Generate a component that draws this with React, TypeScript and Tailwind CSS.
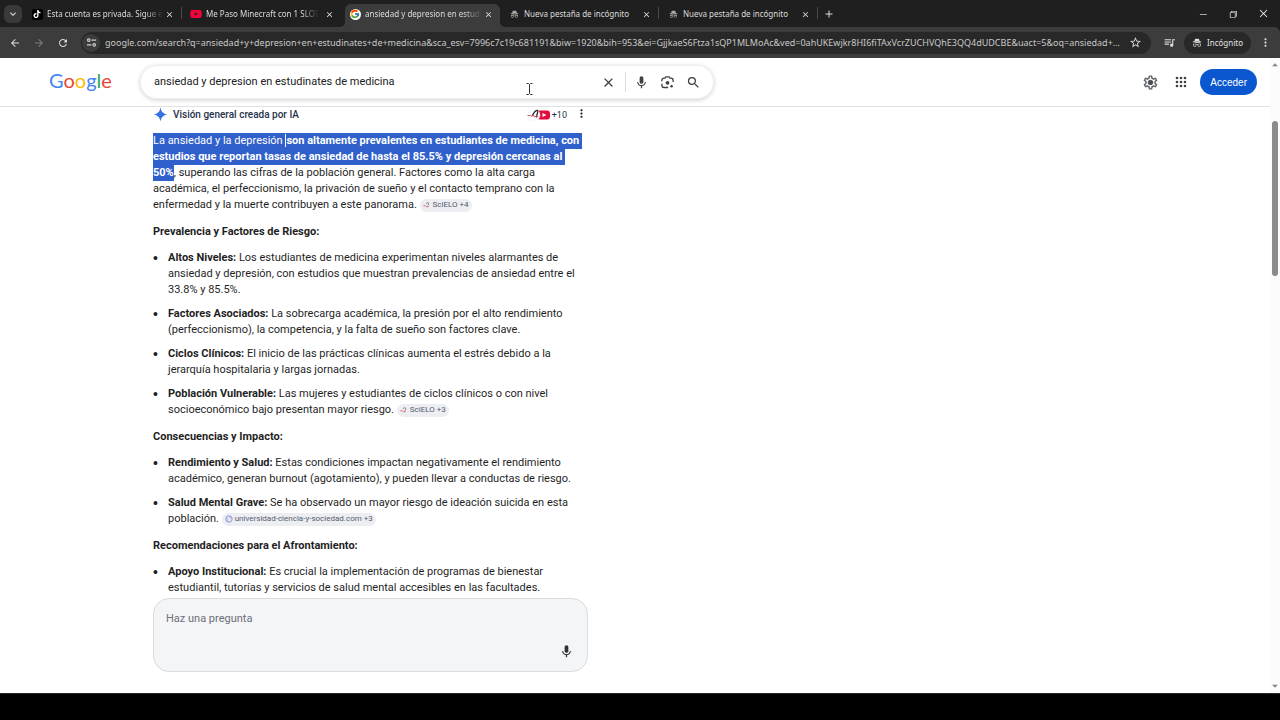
import type { ReactNode } from "react";
import { BsIncognito } from "react-icons/bs";
import { FaYoutube } from "react-icons/fa";
import { FcGoogle } from "react-icons/fc";
import {
  MdAdd,
  MdArrowBack,
  MdArrowDropDown,
  MdArrowDropUp,
  MdArrowForward,
  MdClose,
  MdKeyboardArrowDown,
  MdMic,
  MdMoreVert,
  MdOutlineSettings,
  MdQueueMusic,
  MdRefresh,
  MdSearch,
  MdStarBorder,
} from "react-icons/md";
import { SiTiktok } from "react-icons/si";
import { VscChromeClose, VscChromeMinimize, VscChromeRestore } from "react-icons/vsc";

type TabInfo = { title: string; icon: ReactNode; active?: boolean; fades?: boolean; divider?: boolean };

const tabs: TabInfo[] = [
  {
    title: "Esta cuenta es privada. Sigue e",
    icon: (
      <span className="flex size-[11px] items-center justify-center rounded-[2px] bg-black text-white">
        <SiTiktok size={8} />
      </span>
    ),
    fades: true,
    divider: true,
  },
  { title: "Me Paso Minecraft con 1 SLOT", icon: <FaYoutube size={12} color="#f5033c" />, fades: true },
  {
    title: "ansiedad y depresion en estudi",
    icon: (
      <span className="flex size-[11px] items-center justify-center rounded-full bg-white">
        <FcGoogle size={10} />
      </span>
    ),
    active: true,
    fades: true,
  },
  { title: "Nueva pestaña de incógnito", icon: <BsIncognito size={9} color="#a8a8a8" />, divider: true },
  { title: "Nueva pestaña de incógnito", icon: <BsIncognito size={9} color="#a8a8a8" />, divider: true },
];

function Flare({ side }: { side: "left" | "right" }) {
  return (
    <svg
      viewBox="0 0 5 5"
      className={side === "left" ? "absolute bottom-0 -left-[5px] size-[5px]" : "absolute bottom-0 -right-[5px] size-[5px]"}
      aria-hidden="true"
    >
      <path d={side === "left" ? "M5 0A5 5 0 0 1 0 5H5Z" : "M0 0A5 5 0 0 0 5 5H0Z"} fill="#3c3c3c" />
    </svg>
  );
}

function Tab({ tab }: { tab: TabInfo }) {
  return (
    <div className="flex h-full w-[159px] items-end pr-1">
      <div
        className={
          tab.active
            ? "relative flex h-[23px] min-w-0 flex-1 items-center rounded-t-md bg-[#3c3c3c] pr-[7px] pb-[3px] pl-1"
            : "relative flex h-[23px] min-w-0 flex-1 items-center pr-[7px] pb-[3px] pl-1"
        }
      >
        {tab.active && <Flare side="left" />}
        {tab.active && <Flare side="right" />}
        <button
          type="button"
          role="tab"
          aria-selected={!!tab.active}
          className="flex min-w-0 flex-1 items-center gap-1 text-left"
        >
          <span className="flex w-3 shrink-0 justify-center">{tab.icon}</span>
          <span className={tab.fades ? "mask-r-from-85% whitespace-nowrap" : "whitespace-nowrap"}>{tab.title}</span>
        </button>
        <button type="button" aria-label="Cerrar pestaña" className="text-[#e3e3e3]">
          <MdClose size={9} />
        </button>
      </div>
      {tab.divider && <span className="mb-2 h-3 w-px bg-[#484848]" />}
    </div>
  );
}

function TabStrip() {
  return (
    <div className="flex h-[27px] shrink-0 items-stretch bg-[#1f1f1f] text-[8px] text-[#dcdcdc]">
      <div className="flex w-[27px] shrink-0 items-center pl-1">
        <button
          type="button"
          aria-label="Buscar pestañas"
          className="flex size-[18px] items-center justify-center rounded-md bg-[#3a3a3a]"
        >
          <MdKeyboardArrowDown size={12} />
        </button>
      </div>
      <div role="tablist" className="flex">
        {tabs.map((t, i) => (
          <Tab key={i} tab={t} />
        ))}
      </div>
      <button type="button" aria-label="Pestaña nueva" className="px-px">
        <MdAdd size={12} />
      </button>
      <div className="ml-auto flex items-center gap-5 pr-[11px] text-white">
        <button type="button" aria-label="Minimizar">
          <VscChromeMinimize size={10} />
        </button>
        <button type="button" aria-label="Restaurar">
          <VscChromeRestore size={10} />
        </button>
        <button type="button" aria-label="Cerrar">
          <VscChromeClose size={11} />
        </button>
      </div>
    </div>
  );
}

function TuneIcon() {
  return (
    <svg viewBox="0 0 12 12" className="size-[11px]" fill="none" stroke="#d0d0d0" strokeWidth="1.2" aria-hidden="true">
      <circle cx="3" cy="3.4" r="1.4" />
      <path d="M6 3.4h5M1 8.6h5" />
      <circle cx="9" cy="8.6" r="1.4" />
    </svg>
  );
}

function Toolbar() {
  return (
    <div className="flex h-[31px] shrink-0 items-center rounded-tr-md bg-[#3c3c3c] text-[#dcdcdc]">
      <div className="flex gap-3 pl-[9px]">
        <button type="button" aria-label="Atrás">
          <MdArrowBack size={12} />
        </button>
        <button type="button" aria-label="Adelante" className="text-[#7c7c7c]">
          <MdArrowForward size={12} />
        </button>
        <button type="button" aria-label="Recargar">
          <MdRefresh size={12} />
        </button>
      </div>
      <div className="ml-3 flex h-[22px] min-w-0 flex-1 items-center rounded-full bg-[#282828] pr-[9px] pl-px">
        <button
          type="button"
          aria-label="Información del sitio"
          className="flex size-[18px] items-center justify-center rounded-full bg-[#3c3c3c]"
        >
          <TuneIcon />
        </button>
        <input
          type="text"
          aria-label="Barra de direcciones"
          className="ml-[5px] min-w-0 flex-1 bg-transparent text-[9px] text-ellipsis text-[#c9c9c9] outline-none"
          defaultValue="google.com/search?q=ansiedad+y+depresion+en+estudinates+de+medicina&sca_esv=7996c7c19c681191&biw=1920&bih=953&ei=GjjkaeS6Ftza1sQP1MLMoAc&ved=0ahUKEwjkr8HI6fiTAxVcrZUCHVQhE3QQ4dUDCBE&uact=5&oq=ansiedad+..."
        />
        <button type="button" aria-label="Añadir a marcadores" className="ml-2">
          <MdStarBorder size={13} />
        </button>
      </div>
      <button type="button" aria-label="Contenido multimedia" className="ml-3">
        <MdQueueMusic size={13} />
      </button>
      <button
        type="button"
        className="ml-2 flex h-[22px] items-center gap-[5px] rounded-full bg-[#282828] px-2 text-[8px] text-[#e3e3e3]"
      >
        <BsIncognito size={10} />
        Incógnito
      </button>
      <button type="button" aria-label="Menú" className="mx-2">
        <MdMoreVert size={13} />
      </button>
    </div>
  );
}

function LensIcon() {
  return (
    <svg viewBox="0 0 24 24" className="size-[15px]" fill="none" stroke="#3c4043" strokeWidth="2.1" aria-hidden="true">
      <path d="M3 10V8.500A3.500 3.500 0 0 1 6.500 5H8l1.500-2h5L16 5h1.500A3.500 3.500 0 0 1 21 8.500V11" />
      <path d="M3 14v2.500A3.500 3.500 0 0 0 6.500 20H13" />
      <circle cx="12" cy="12.500" r="3" fill="#3c4043" stroke="none" />
      <circle cx="18.500" cy="18" r="2" fill="#3c4043" stroke="none" />
    </svg>
  );
}

function GearIcon() {
  return (
    <svg viewBox="0 0 24 24" className="size-[17px]" aria-hidden="true">
      <MdOutlineSettings size={24} color="#5f6368" />
      <circle cx="12" cy="12" r="3" fill="#4a4d51" />
    </svg>
  );
}

function AppsIcon() {
  const stops = [6, 12, 18];
  return (
    <svg viewBox="0 0 24 24" className="size-4" fill="#3c4043" aria-hidden="true">
      {stops.map((y) => stops.map((x) => <circle key={`${x}-${y}`} cx={x} cy={y} r="2" />))}
    </svg>
  );
}

function SearchHeader() {
  return (
    <header className="z-10 flex h-[49px] shrink-0 items-center border-b border-[#dfe1e5] bg-white">
      <a
        href="#inicio"
        aria-label="Google"
        className="ml-[49px] w-[91px] pb-1 font-['Lato'] text-[20px] leading-7 font-normal"
      >
        <span className="text-[#4285f4]">G</span>
        <span className="text-[#ea4335]">o</span>
        <span className="text-[#fbbc05]">o</span>
        <span className="text-[#4285f4]">g</span>
        <span className="text-[#34a853]">l</span>
        <span className="text-[#ea4335]">e</span>
      </a>
      <form
        role="search"
        className="flex h-[34px] w-[574px] items-center rounded-full border border-[#eceef0] pr-3 pl-[13px] text-[#3c4043] shadow-[0_1px_4px_rgba(32,33,36,0.22)]"
      >
        <input
          type="text"
          aria-label="Buscar"
          defaultValue="ansiedad y depresion en estudinates de medicina"
          className="min-w-0 flex-1 text-[11px] text-[#202124] outline-none"
        />
        <button type="button" aria-label="Borrar">
          <MdClose size={15} />
        </button>
        <span className="mr-2 ml-[9px] h-5 w-px bg-[#dadce0]" />
        <button type="button" aria-label="Buscar por voz">
          <MdMic size={15} />
        </button>
        <button type="button" aria-label="Buscar por imagen" className="ml-[11px]">
          <LensIcon />
        </button>
        <button type="submit" aria-label="Buscar en Google" className="ml-[11px]">
          <MdSearch size={15} />
        </button>
      </form>
      <div className="ml-auto flex items-center pr-[13px] text-[#3c4043]">
        <button type="button" aria-label="Configuración">
          <GearIcon />
        </button>
        <button type="button" aria-label="Aplicaciones de Google" className="mr-[11px] ml-[14px]">
          <AppsIcon />
        </button>
        <a
          href="#acceder"
          className="flex h-[26px] items-center rounded-full bg-[#0b57d0] px-[10px] font-['Liberation_Sans'] text-[10px] font-medium text-white"
        >
          Acceder
        </a>
      </div>
    </header>
  );
}

function ScieloMark() {
  return (
    <svg viewBox="0 0 10 8" className="size-2" fill="none" aria-hidden="true">
      <path d="M0.500 5H3M3.500 5.500C4.500 6.500 6.500 6.500 7.500 5" stroke="#d93a4a" strokeWidth="1" />
      <path d="M4 2.500C5 0.500 7.500 0.500 7 3L6 4.500" stroke="#55606c" strokeWidth="1" />
    </svg>
  );
}

function Source({ children, globe }: { children: ReactNode; globe?: boolean }) {
  return (
    <button
      type="button"
      className="inline-flex h-[13px] items-center gap-[2px] rounded-full bg-[#eceef2] px-[3px] align-middle text-[8px] leading-3 text-[#545d70]"
    >
      {globe ? (
        <svg viewBox="0 0 8 8" className="size-2" fill="none" stroke="#8d93d8" aria-hidden="true">
          <circle cx="4" cy="4" r="3.200" strokeWidth="1" />
          <path d="M1 3l2 1 0 2.500M5 1l-.5 1.500L7 4" strokeWidth="0.600" />
        </svg>
      ) : (
        <ScieloMark />
      )}
      {children}
    </button>
  );
}

function Item({ label, children }: { label: string; children: ReactNode }) {
  return (
    <li className="flex">
      <span className="w-[15px] shrink-0 font-['Liberation_Sans'] text-[14px]">•</span>
      <p className="whitespace-nowrap">
        <strong className="font-bold">{label}</strong> {children}
      </p>
    </li>
  );
}

function Heading({ children }: { children: ReactNode }) {
  return <h2 className="mt-[11px] mb-[10px] font-bold">{children}</h2>;
}

function Overview() {
  return (
    <article className="min-h-0 flex-1 overflow-hidden text-[11px] leading-4 text-[#1f1f1f]">
      <div className="flex h-[26px] items-start gap-[5px]">
        <svg viewBox="0 0 14 14" className="size-[15px]" aria-hidden="true">
          <path d="M7 0.500C7.700 4.500 9.500 6.300 13.500 7 9.500 7.700 7.700 9.500 7 13.500 6.300 9.500 4.500 7.700 0.500 7 4.500 6.300 6.300 4.500 7 0.500Z" fill="#3571e0" />
        </svg>
        <h1 className="flex-1 text-[10px] leading-[15px] font-medium text-[#25324a]">Visión general creada por IA</h1>
        <button type="button" className="flex h-[15px] items-center text-[9px] text-[#25324a]">
          <svg viewBox="0 0 24 12" className="h-3 w-6" aria-hidden="true">
            <rect x="10" y="1.500" width="13" height="9" rx="3" fill="#e5093c" />
            <path d="M15.500 4l4 2-4 2Z" fill="#fff" />
            <circle cx="7" cy="6" r="6" fill="#fff" stroke="#eceef2" strokeWidth="0.600" />
            <path d="M5.500 7C6 4.500 8.500 1 10.500 1.300 12 2 9 6 9.500 8.500" fill="none" stroke="#252525" strokeWidth="1.300" />
            <path d="M0.500 6.500h3l1.500 1 1.500-1.500 1 2 2-1 2 .5" fill="none" stroke="#d3606e" strokeWidth="1" />
          </svg>
          <span className="ml-px">+10</span>
        </button>
        <button type="button" aria-label="Más opciones" className="ml-[3px]">
          <MdMoreVert size={13} />
        </button>
      </div>
      <p className="whitespace-nowrap">
        <mark className="inline-block bg-[#3060cc] align-top text-white">
          La ansiedad y la depresión&nbsp;
          <strong className="border-l border-white font-bold">son altamente prevalentes en estudiantes de medicina, con&nbsp;</strong>
        </mark>
        <br />
        <mark className="inline-block bg-[#3060cc] align-top font-bold text-white">
          estudios que reportan tasas de ansiedad de hasta el 85.5% y depresión cercanas al&nbsp;
        </mark>
        <br />
        <mark className="inline-block bg-[#3060cc] align-top font-bold text-white">50%</mark>, superando las cifras de la
        población general. Factores como la alta carga
        <br />
        académica, el perfeccionismo, la privación de sueño y el contacto temprano con la
        <br />
        enfermedad y la muerte contribuyen a este panorama.{" "}
        <Source>SciELO +4</Source>
      </p>
      <Heading>Prevalencia y Factores de Riesgo:</Heading>
      <ul className="flex flex-col gap-2">
        <Item label="Altos Niveles:">
          Los estudiantes de medicina experimentan niveles alarmantes de
          <br />
          ansiedad y depresión, con estudios que muestran prevalencias de ansiedad entre el
          <br />
          33.8% y 85.5%.
        </Item>
        <Item label="Factores Asociados:">
          La sobrecarga académica, la presión por el alto rendimiento
          <br />
          (perfeccionismo), la competencia, y la falta de sueño son factores clave.
        </Item>
        <Item label="Ciclos Clínicos:">
          El inicio de las prácticas clínicas aumenta el estrés debido a la
          <br />
          jerarquía hospitalaria y largas jornadas.
        </Item>
        <Item label="Población Vulnerable:">
          Las mujeres y estudiantes de ciclos clínicos o con nivel
          <br />
          socioeconómico bajo presentan mayor riesgo.{" "}
          <Source>SciELO +3</Source>
        </Item>
      </ul>
      <Heading>Consecuencias y Impacto:</Heading>
      <ul className="flex flex-col gap-2">
        <Item label="Rendimiento y Salud:">
          Estas condiciones impactan negativamente el rendimiento
          <br />
          académico, generan burnout (agotamiento), y pueden llevar a conductas de riesgo.
        </Item>
        <Item label="Salud Mental Grave:">
          Se ha observado un mayor riesgo de ideación suicida en esta
          <br />
          población.{" "}
          <Source globe>universidad-ciencia-y-sociedad.com +3</Source>
        </Item>
      </ul>
      <Heading>Recomendaciones para el Afrontamiento:</Heading>
      <ul className="flex flex-col gap-2">
        <Item label="Apoyo Institucional:">
          Es crucial la implementación de programas de bienestar
          <br />
          estudiantil, tutorías y servicios de salud mental accesibles en las facultades.
        </Item>
      </ul>
    </article>
  );
}

function AskBox() {
  return (
    <form className="mb-[21px] flex h-[74px] shrink-0 rounded-2xl border border-[#d9dce0] bg-[#f3f5f6] p-3">
      <textarea
        aria-label="Haz una pregunta"
        placeholder="Haz una pregunta"
        className="min-w-0 flex-1 resize-none bg-transparent text-[11px] leading-4 outline-none placeholder:text-[#6b6f7b]"
      />
      <button type="button" aria-label="Preguntar por voz" className="self-end pr-[1px] text-[#303134]">
        <MdMic size={15} />
      </button>
    </form>
  );
}

function Scrollbar() {
  return (
    <div className="flex w-[10px] shrink-0 flex-col items-center bg-[#fcfcfc] text-[#858585]" aria-hidden="true">
      <MdArrowDropUp size={14} />
      <div className="mt-[49px] h-[155px] w-[6px] rounded-full bg-[#8b8b8b]" />
      <MdArrowDropDown size={14} className="mt-auto" />
    </div>
  );
}

export default function App() {
  return (
    <div className="flex h-screen flex-col bg-black font-['Noto_Sans',sans-serif]">
      <div className="bg-[#1f1f1f]">
        <TabStrip />
        <Toolbar />
      </div>
      <div className="relative flex min-h-0 flex-1 bg-white font-['Roboto',sans-serif]">
        <div className="flex min-w-0 flex-1 flex-col">
          <SearchHeader />
          <main className="ml-[153px] flex min-h-0 w-[435px] flex-1 flex-col">
            <Overview />
            <AskBox />
          </main>
        </div>
        <Scrollbar />
        <svg viewBox="0 0 7 12" className="absolute top-[25px] left-[526px] z-20 h-3 w-[7px]" fill="none" stroke="#333" aria-hidden="true">
          <path d="M0.500 0.500h2l1 1 1-1h2M0.500 11.500h2l1-1 1 1h2M3.500 1.500v9" />
        </svg>
      </div>
      <div className="h-[27px] shrink-0 border-t border-[#2a2a2a] bg-black" />
    </div>
  );
}
